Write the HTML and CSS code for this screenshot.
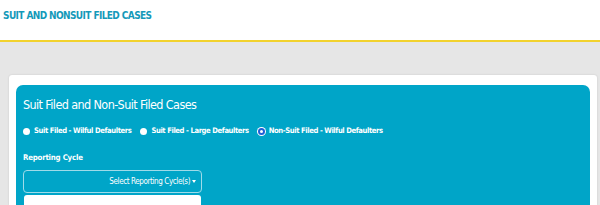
FILE: index.html
```html
<!DOCTYPE html>
<html lang="en">
<head>
    <meta charset="UTF-8">
    <meta name="viewport" content="width=device-width, initial-scale=1.0">
    <title>Suit and Nonsuit Filed Cases</title>
    <link rel="stylesheet" href="styles.css">
</head>
<body>
    <header class="page-header">
        <h1>SUIT AND NONSUIT FILED CASES</h1>
    </header>
    <main class="content">
        <div class="card">
            <div class="panel">
                <h2>Suit Filed and Non-Suit Filed Cases</h2>
                <div class="radio-row">
                    <label><span class="radio"></span> Suit Filed - Wilful Defaulters</label>
                    <label><span class="radio"></span> Suit Filed - Large Defaulters</label>
                    <label><span class="radio checked"></span> Non-Suit Filed - Wilful Defaulters</label>
                </div>
                <div class="field-label">Reporting Cycle</div>
                <div class="select-wrap">
                    <button type="button" class="select-btn">Select Reporting Cycle(s) <span class="caret"></span></button>
                    <div class="select-menu"></div>
                </div>
            </div>
        </div>
    </main>
</body>
</html>
```

FILE: styles.css
```css
body {
    margin: 0;
    font-family: "DejaVu Sans Condensed", "Open Sans", sans-serif;
    background-color: #e6e6e6;
    height: 205px;
    overflow: hidden;
}
.page-header {
    background: #fff;
    height: 40px;
    border-bottom: 2px solid #f2d22e;
}
.page-header h1 {
    margin: 0;
    padding: 10px 0 0 3px;
    line-height: 12px;
    font-size: 10px;
    font-weight: bold;
    letter-spacing: -0.6px;
    color: #1499b9;
}
.content {
    padding: 33px 3px 0 9px;
}
.card {
    background: #fff;
    border-radius: 3px 3px 0 0;
    padding: 10px 7px 0 7px;
    box-shadow: 0 0 2px rgba(0, 0, 0, 0.15);
}
.panel {
    background: #00a5c8;
    border-radius: 7px 7px 0 0;
    padding: 11px 7px 0 7px;
    height: 109px;
    color: #fff;
}
.panel h2 {
    margin: 0;
    line-height: 18px;
    font-size: 12.5px;
    font-weight: normal;
    letter-spacing: -0.6px;
}
.radio-row {
    display: flex;
    gap: 9px;
    margin-top: 12px;
    line-height: 10px;
    font-size: 7.6px;
    font-weight: bold;
    letter-spacing: -0.4px;
}
.radio-row label {
    display: flex;
    align-items: center;
    gap: 4px;
}
.radio {
    width: 7px;
    height: 7px;
    border-radius: 50%;
    background: #fff;
    box-sizing: border-box;
}
.radio.checked {
    border: 2px solid #1f5fd6;
    box-shadow: 0 0 0 1px #fff;
}
.field-label {
    margin-top: 17px;
    line-height: 10px;
    font-size: 7.8px;
    font-weight: bold;
    letter-spacing: -0.2px;
}
.select-wrap {
    margin-top: 7px;
    width: 179px;
}
.select-btn {
    display: block;
    width: 100%;
    height: 23px;
    background: transparent;
    border: 1px solid #9fdbe9;
    border-radius: 4px;
    color: #fff;
    font-family: inherit;
    font-size: 8px;
    letter-spacing: -0.4px;
    text-align: right;
    padding: 0 5px;
}
.caret {
    display: inline-block;
    border-top: 3px solid #fff;
    border-left: 2.5px solid transparent;
    border-right: 2.5px solid transparent;
    vertical-align: middle;
}
.select-menu {
    margin: 2px 1px 0 1px;
    height: 10px;
    background: #fff;
    border-radius: 3px 3px 0 0;
}
```
